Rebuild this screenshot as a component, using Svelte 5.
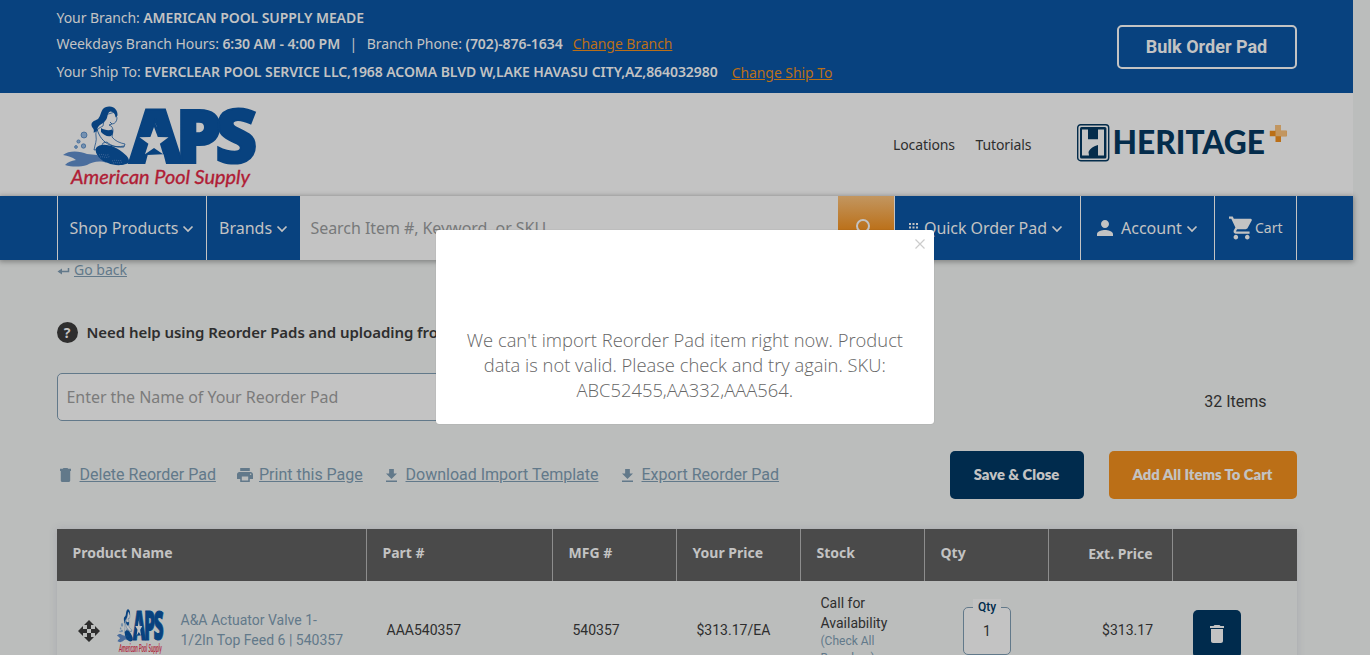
<script>
  const columns = ['Product Name', 'Part #', 'MFG #', 'Your Price', 'Stock', 'Qty', 'Ext. Price', ''];
  const item = {
    name: 'A&A Actuator Valve 1-1/2In Top Feed 6 | 540357',
    part: 'AAA540357',
    mfg: '540357',
    price: '$313.17/EA',
    qty: 1,
    total: '$313.17'
  };
  const trash = 'M6 19c0 1.1.9 2 2 2h8c1.1 0 2-.9 2-2V7H6v12zM19 4h-3.5l-1-1h-5l-1 1H5v2h14V4z';
</script>

{#snippet chevron()}
  <svg class="chevron" viewBox="0 0 12 8" width="12" height="8"><path d="M1.5 1.5 6 6l4.500-4.500" /></svg>
{/snippet}

{#snippet apsLogo(w, h)}
  <svg class="aps" width={w} height={h} viewBox="0 0 192 84" preserveAspectRatio="none">
    <path class="tail" d="M0 49c6-5 17-4 24-1l10 1 10 8c-8-3-14-1-20 2-7 2-15 2-22 0 3-3 6-4 11-5-4-3-8-4-13-5z" />
    <g class="bubble"><circle cx="21" cy="29" r="3" /><circle cx="15.500" cy="35.500" r="1.600" /><circle cx="20.500" cy="40" r="2.200" /><circle cx="13" cy="41" r="1.400" /></g>
    <path class="skin" d="M42 9 52 6l2 6c0 3-2 6-5 6l-3 1c3 1 4 3 4 6l-1 6c3 4 8 6 13 7l-1 3c-6 1-13-1-17-5l-4 1-3 6-6 1c1-6 3-9 2-14-1-6 3-8 7-10z" />
    <path class="ink" d="M29 21c-2-5 2-6 6-8C39 9 37 1 46 .5c5-.5 9 4 8.500 9l-2 2c0-3-2-6-5-6-4 1-2 6-5 9-3 4-7 4-8 8 0 2-2 4-4 4 1-2 0-4-1.500-5.500z" />
    <path class="ink" d="M38 22c3 2 8 3 11 1.500 2 2 1 5-1 6.500-4 1-7-1-10-4z" />
    <path class="fold" d="M34 23c2 7 6 13 13 16 5 2 9 2 14 1m-14-24 2 2" />
    <path class="ink" d="M33 42c4-5 13-3 18-1 8 4 16 10 15 15-3 4-15 4-21 1-7-2-14-9-12-15z" />
    <g class="scale"><path d="M36 49c4-2 7 2 10-1m-9 3c4-1 6 2 10-1m2 5c5-2 7 1 10-1m-9 3c4-1 6 1 9-1" /></g>
    <text class="aps-name" x="66" y="56.500" textLength="121.500" lengthAdjust="spacingAndGlyphs">APS</text>
    <path class="ink" d="m91 14 14 34-21 1z" />
    <path class="star" d="m91 21 3.800 10 10.700.200-8.600 6.500 3.200 10.600-9.100-6.300-9 6.300 3.400-10.600-8.900-6.500 10.900-.200z" />
    <text class="aps-tag" x="8" y="78" textLength="179" lengthAdjust="spacingAndGlyphs">American Pool Supply</text>
  </svg>
{/snippet}

<div class="viewport">
  <div class="page">
    <header class="branch">
      <div class="wrap branch-in">
        <div class="info">
          <p>Your Branch: <b>AMERICAN POOL SUPPLY MEADE</b></p>
          <p>Weekdays Branch Hours: <b>6:30 AM - 4:00 PM</b><i>|</i>Branch Phone: <b>(702)-876-1634</b><a href="#branch">Change Branch</a></p>
          <p class="ship">Your Ship To: <b>EVERCLEAR POOL SERVICE LLC,1968 ACOMA BLVD W,LAKE HAVASU CITY,AZ,864032980</b><a href="#ship">Change Ship To</a></p>
        </div>
        <button class="bulk">Bulk Order Pad</button>
      </div>
    </header>

    <div class="brandbar">
      <div class="wrap brand-in">
        {@render apsLogo(192, 84)}
        <div class="toplinks"><span class="loc">Locations</span><span class="tut">Tutorials</span></div>
        <svg class="heritage" width="212" height="40" viewBox="0 0 212 40">
          <rect x=".7" y=".7" width="31" height="36" rx="3" class="hb" />
          <rect x="3" y="3" width="26.400" height="31.400" rx="1.500" class="hf" />
          <path class="hl" d="M5 5.500h6v9.800h10V5.500h6v26h-6V21c-4 1-8 3.500-9.500 7l.5 3.500H5z" />
          <text x="35.500" y="30" textLength="152.500" lengthAdjust="spacingAndGlyphs">HERITAGE</text>
          <path class="p1" d="M198.500 1h5.500v5.700h5.700v5.500H204v5.700h-5.500v-5.700h-5.700V6.700h5.700z" /><path class="p2" d="M198.500 1h5.500v5.700h5.700v5.500h-11.200z" />
        </svg>
      </div>
    </div>

    <nav>
      <div class="wrap nav-in">
        <div class="cell shop"><span>Shop Products</span>{@render chevron()}</div>
        <div class="cell brands"><span>Brands</span>{@render chevron()}</div>
        <div class="search">Search Item #, Keyword, or SKU</div>
        <div class="go"><svg width="24" height="24" viewBox="0 0 24 24"><circle cx="10" cy="10" r="6" /><path d="m14.500 14.500 6 6" /></svg></div>
        <div class="cell quick">
          <svg class="dots" width="9" height="10" viewBox="0 0 9 10"><path d="M0 0h2v2H0zm3.500 0h2v2h-2zM7 0h2v2H7zM0 3.500h2v2H0zm3.500 0h2v2h-2zm3.500 0h2v2H7zM0 7h2v2H0zm3.500 0h2v2h-2zM7 7h2v2H7z" /></svg>
          <span>Quick Order Pad</span>{@render chevron()}
        </div>
        <div class="cell account">
          <svg width="16" height="16" viewBox="4 4 16 16"><path d="M12 12c2.210 0 4-1.790 4-4s-1.790-4-4-4-4 1.790-4 4 1.790 4 4 4zm0 2c-2.670 0-8 1.340-8 4v2h16v-2c0-2.660-5.330-4-8-4z" /></svg>
          <span>Account</span>{@render chevron()}
        </div>
        <div class="cell cart">
          <svg width="24" height="24" viewBox="1 2 21 20"><path d="M7 18c-1.100 0-1.990.9-1.990 2S5.900 22 7 22s2-.9 2-2-.9-2-2-2zM1 2v2h2l3.600 7.590-1.350 2.450c-.16.280-.25.610-.25.960 0 1.100.9 2 2 2h12v-2H7.420c-.14 0-.25-.11-.25-.25l.03-.12.9-1.630h7.450c.75 0 1.410-.41 1.750-1.030l3.580-6.490A1 1 0 0 0 20 4H5.210l-.94-2H1zm16 16c-1.100 0-1.990.9-1.990 2s.89 2 1.990 2 2-.9 2-2-.9-2-2-2z" /></svg>
          <span>Cart</span>
        </div>
      </div>
    </nav>

    <main class="wrap">
      <div class="back">
        <svg width="13" height="10" viewBox="0 0 13 10"><path d="M11.500 2v3.500H2" /><path class="tip" d="M5 2.500v6l-4.500-3z" /></svg><a href="#back">Go back</a>
      </div>
      <div class="help"><span class="q">?</span><b>Need help using Reorder Pads and uploading from Excel?</b></div>
      <div class="namebar"><div class="field">Enter the Name of Your Reorder Pad</div><span class="count">32 Items</span></div>
      <div class="actions">
        <div class="act a1"><svg width="11" height="14" viewBox="5 3 14 18" preserveAspectRatio="none"><path d="M6 19c0 1.100.9 2 2 2h8c1.100 0 2-.9 2-2V6H6zM19 4h-3.500l-1-1h-5l-1 1H5v3h14z" /></svg><a href="#delete">Delete Reorder Pad</a></div>
        <div class="act a2"><svg width="16" height="14" viewBox="2 3 20 18" preserveAspectRatio="none"><path d="M19 8H5c-1.660 0-3 1.340-3 3v6h4v4h12v-4h4v-6c0-1.660-1.340-3-3-3zm-3 11H8v-5h8v5zm3-7c-.55 0-1-.45-1-1s.45-1 1-1 1 .45 1 1-.45 1-1 1zm-1-9H6v4h12V3z" /></svg><a href="#print">Print this Page</a></div>
        <div class="act a3"><svg width="11" height="13" viewBox="5 3 14 17" preserveAspectRatio="none"><path d="M19 9h-4V3H9v6H5l7 7 7-7zM5 18v2h14v-2H5z" /></svg><a href="#template">Download Import Template</a></div>
        <div class="act a4"><svg width="11" height="13" viewBox="5 3 14 17" preserveAspectRatio="none"><path d="M19 9h-4V3H9v6H5l7 7 7-7zM5 18v2h14v-2H5z" /></svg><a href="#export">Export Reorder Pad</a></div>
        <div class="btns"><button class="save">Save &amp; Close</button><button class="add">Add All Items To Cart</button></div>
      </div>

      <div class="table">
        <div class="row head">
          {#each columns as c, i}<div class:right={i === 6}>{c}</div>{/each}
        </div>
        <div class="row body">
          <div class="prod">
            <svg class="move" width="22" height="22" viewBox="0 0 22 22"><path d="M11 0l5 5h-3v4H9V5H6zM11 22l5-5h-3v-4H9v4H6zM0 11l5-5v3h4v4H5v3zM22 11l-5-5v3h-4v4h4v3z" /></svg>
            {@render apsLogo(46, 46)}
            <span class="pname">{item.name}</span>
          </div>
          <div class="part">{item.part}</div>
          <div class="mfg">{item.mfg}</div>
          <div class="price">{item.price}</div>
          <div class="stock"><span>Call for Availability</span><small>(Check All Branches)</small></div>
          <div class="qtycell"><div class="qty"><label for="qty">Qty</label><span id="qty">{item.qty}</span></div></div>
          <div class="total">{item.total}</div>
          <div class="delcell"><button class="del" aria-label="Delete"><svg width="14" height="18" viewBox="5 3 14 18"><path d={trash} /></svg></button></div>
        </div>
      </div>
    </main>
  </div>

  <div class="modal" role="dialog">
    <svg class="close" width="10" height="10" viewBox="0 0 10 10"><path d="m.5.5 9 9m0-9-9 9" /></svg>
    <p>We can't import Reorder Pad item right now. Product data is not valid. Please check and try again. SKU: ABC52455,AA332,AAA564.</p>
  </div>
</div>

<style>
  :global(body) { margin: 0; background: #bbbdbc; overflow: hidden; }
  .viewport { height: 655px; overflow: hidden; position: relative; background: #bbbdbc; font-family: "Noto Sans", sans-serif; color: #2e2e2e; }
  .viewport * { box-sizing: border-box; }
  .page { width: 1353px; }
  .wrap { width: 1240px; margin-left: 56.5px; }
  p { margin: 0; }
  button { border: 0; padding: 0; color: #c3c3c3; }
  svg { display: block; flex: none; overflow: visible; }

  .branch { height: 93px; background: #08427f; color: #c3c3c3; }
  .branch-in { display: flex; justify-content: space-between; }
  .info { padding-top: 5px; font-size: 14px; line-height: 26px; white-space: nowrap; letter-spacing: -.068px; }
  .info b { font-weight: 600; }
  .info i { font-style: normal; margin: 0 9.5px; }
  .info a { color: #bb6f17; margin-left: 10px; }
  .info .ship { margin-top: 2px; }
  .info .ship a { margin-left: 14px; position: relative; top: 1px; }
  .bulk { width: 180px; height: 44px; margin-top: 25px; padding-bottom: 2px; border: 2px solid #c3c3c3; border-radius: 5px; background: none; font: 700 18px Roboto, sans-serif; }

  .brandbar { height: 103px; background: #c3c3c3; }
  .brand-in { display: flex; padding-top: 13px; padding-left: 6px; }
  .ink, .aps-name { fill: #08427f; }
  .tail { fill: #4a6d9d; }
  .bubble { fill: #7591b1; stroke: #315f91; stroke-width: .7; }
  .skin { fill: #c3c3c3; stroke: #08427f; stroke-width: .7; }
  .fold { fill: none; stroke: #08427f; stroke-width: .8; }
  .scale { fill: none; stroke: #4a6d9d; stroke-width: .8; stroke-dasharray: 1 1; }
  .star { fill: #c3c3c3; }
  .aps-name { font: 800 75px "Open Sans", sans-serif; letter-spacing: -7px; stroke: #08427f; stroke-width: 2; }
  .aps-tag { fill: #b01c35; stroke: #b01c35; stroke-width: .35; font: italic 400 20px Lato, sans-serif; }
  .toplinks { display: flex; margin-left: 638.5px; padding-top: 29px; font-size: 14px; line-height: 20px; letter-spacing: -.1px; }
  .loc { width: 82.5px; }
  .tut { width: 101px; }
  .heritage { margin-top: 18px; }
  .heritage text { font: 900 31.5px Lato, sans-serif; fill: #042c4b; }
  .hb { fill: none; stroke: #042c4b; stroke-width: 1.400; }
  .hf { fill: #042c4b; }
  .hl { fill: #c3c3c3; }
  .p1 { fill: #bb6f17; }
  .p2 { fill: #c29660; }

  nav { height: 64px; background: #08427f; color: #c3c3c3; position: relative; box-shadow: 0 1px 5px 1px rgba(0, 0, 0, .3); }
  .nav-in { display: flex; height: 64px; width: 1240px; margin-left: 57px; font-size: 16px; }
  .cell { display: flex; align-items: center; height: 64px; border-left: 1px solid #c3c3c3; white-space: nowrap; }
  .chevron { fill: none; stroke: #c3c3c3; stroke-width: 1.700; margin: 2px 0 0 4px; }
  .cell path { fill: #c3c3c3; }
  .cell .chevron path { fill: none; }
  .shop { width: 149px; padding-left: 11.5px; }
  .brands { width: 94px; padding-left: 12px; }
  .search { width: 538px; background: #c3c3c3; color: #77797a; line-height: 64px; padding-left: 10.5px; letter-spacing: -.06px; }
  .go { width: 56px; background: linear-gradient(#c29660, #bb6f17 55%); padding: 20px 0 0 15px; }
  .go svg { fill: none; stroke: #c3c3c3; stroke-width: 2; }
  .quick { width: 186px; padding-left: 14px; letter-spacing: -.06px; }
  .quick span { margin-left: 6px; }
  .account { width: 134px; padding-left: 16px; }
  .account span { margin-left: 8px; }
  .cart { width: 83px; padding-left: 14px; border-right: 1px solid #c3c3c3; font-size: 14px; }
  .cart span { margin: -1px 0 0 2px; }

  .back { display: flex; align-items: center; height: 20px; margin-top: -1px; font-size: 14px; color: #62798a; }
  .back svg { fill: none; stroke: #62798a; stroke-width: 1.500; margin: 4px 4.5px 0 0; }
  .back .tip { fill: #62798a; stroke: none; }
  a { color: #62798a; text-decoration: underline; }
  .help { display: flex; align-items: center; height: 22px; margin-top: 42px; font-size: 15px; }
  .help b { font-weight: 600; margin-left: 9px; letter-spacing: -.06px; }
  .q { width: 21px; height: 21px; border-radius: 50%; background: #2e2e2e; color: #c3c3c3; font: 700 14px/21px "Noto Sans", sans-serif; text-align: center; }
  .namebar { display: flex; justify-content: space-between; margin-top: 30px; height: 48px; padding-right: 30px; }
  .field { width: 600px; border: 1px solid #62798a; border-radius: 5px; background: #c3c3c3; color: #7b7b7b; font-size: 16px; line-height: 46px; padding-left: 9px; letter-spacing: -.05px; }
  .count { font: 16px/58px Roboto, sans-serif; }
  .actions { display: flex; align-items: center; margin-top: 30px; height: 48px; font: 16px Roboto, sans-serif; }
  .act { display: flex; align-items: center; }
  .act a { margin-top: -2px; }
  .act svg { fill: #62798a; }
  .a1 { width: 180px; padding-left: 3px; }
  .a1 a { margin-left: 9px; }
  .a2 { width: 149px; }
  .a2 a { margin-left: 6.5px; }
  .a3 { width: 236px; }
  .a3 a, .a4 a { margin-left: 9px; }
  .btns { display: flex; gap: 25px; margin-left: auto; }
  .btns button { height: 48px; padding-bottom: 3px; border-radius: 5px; font: 800 14.8px Lato, sans-serif; }
  .save { width: 134px; background: #002b4d; }
  .add { width: 188px; background: #bb6f17; }

  .table { margin-top: 30px; box-shadow: 0 0 8px rgba(80, 80, 110, .18); }
  .row { display: grid; grid-template-columns: 310px 186px repeat(6, 124px); }
  .head > div { height: 52px; background: #4a4a4a; border-right: 1px solid #8d8d8d; color: #c3c3c3; font-size: 14px; font-weight: 700; line-height: 48px; padding-left: 16px; }
  .head > div:last-child { border-right: 0; }
  .head > .right { text-align: right; padding: 1px 19px 0 0; }
  .body { height: 98px; align-items: center; font: 14px/20px Roboto, sans-serif; }
  .prod { display: flex; align-items: center; padding-left: 21px; }
  .move { fill: #2e2e2e; margin-top: 2px; }
  .prod .aps { margin: 4px 0 0 17px; }
  .pname { width: 165px; margin-left: 18px; color: #62798a; }
  .part, .mfg, .price { padding-left: 20px; }
  .stock { align-self: start; padding: 12px 20px 0 20px; }
  .stock span, .stock small { display: block; }
  .stock small { font-size: 12px; line-height: 17px; color: #62798a; }
  .qtycell { padding: 2px 0 0 38.5px; }
  .qty { width: 48px; height: 48px; border: 1px solid #62798a; border-radius: 5px; background: #c3c3c3; position: relative; text-align: center; line-height: 47px; }
  .qty label { position: absolute; left: 9px; top: -9px; width: 28px; background: #c3c3c3; font: 500 12px/16px Roboto, sans-serif; color: #002b4d; }
  .total { text-align: right; padding-right: 19.5px; }
  .delcell { padding: 7px 0 0 20px; }
  .del { width: 48px; height: 48px; border-radius: 5px; background: #002b4d; display: flex; align-items: center; justify-content: center; }
  .del svg { fill: #c3c3c3; }

  .modal { position: absolute; left: 435.6px; top: 230px; width: 498.5px; height: 194px; background: #fff; border-radius: 3px; box-shadow: 0 0 1px rgba(0, 0, 0, .3); padding: 97px 24px 0; text-align: center; color: #666; font: 300 18.36px/25px "Open Sans", sans-serif; }
  .close { position: absolute; right: 9px; top: 9px; fill: none; stroke: #ccc; stroke-width: 1.200; }
</style>
